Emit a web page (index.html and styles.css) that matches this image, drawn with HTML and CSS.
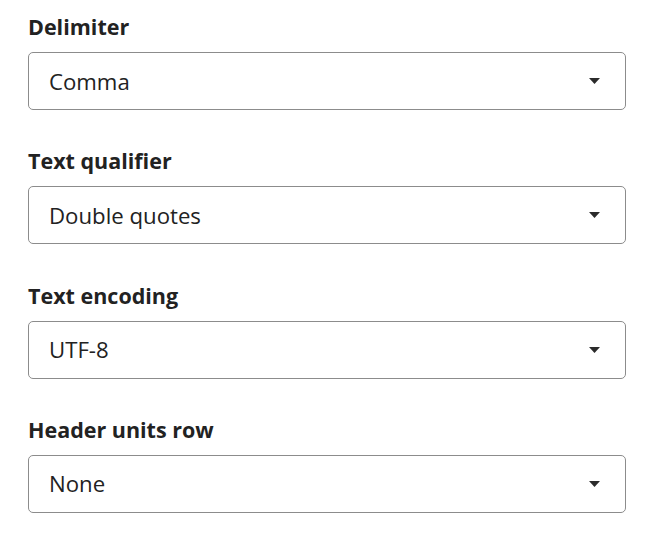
FILE: index.html
```html
<!DOCTYPE html>
<html lang="en">
<head>
  <meta charset="UTF-8" />
  <meta name="viewport" content="width=device-width, initial-scale=1.0"/>
  <title>Import options</title>
  <link rel="stylesheet" href="styles.css">
</head>
<body>
  <div class="form">
    <div class="field">
      <label>Delimiter</label>
      <div class="select">
        <span>Comma</span>
        <svg class="arrow" width="11" height="6" viewBox="0 0 11 6"><path d="M0 0h11L5.5 6z"/></svg>
      </div>
    </div>

    <div class="field">
      <label>Text qualifier</label>
      <div class="select">
        <span>Double quotes</span>
        <svg class="arrow" width="11" height="6" viewBox="0 0 11 6"><path d="M0 0h11L5.5 6z"/></svg>
      </div>
    </div>

    <div class="field">
      <label>Text encoding</label>
      <div class="select">
        <span>UTF-8</span>
        <svg class="arrow" width="11" height="6" viewBox="0 0 11 6"><path d="M0 0h11L5.5 6z"/></svg>
      </div>
    </div>

    <div class="field">
      <label>Header units row</label>
      <div class="select">
        <span>None</span>
        <svg class="arrow" width="11" height="6" viewBox="0 0 11 6"><path d="M0 0h11L5.5 6z"/></svg>
      </div>
    </div>
  </div>
</body>
</html>
```

FILE: styles.css
```css
body {
  margin: 0;
  background: #fff;
  font-family: "Open Sans", Arial, sans-serif;
  color: #222;
}

.form {
  padding: 13px 34px 0 28px;
}

.field {
  margin-bottom: 37.3px;
}

label {
  display: block;
  font-size: 21.5px;
  font-weight: 700;
  line-height: 28px;
  margin-bottom: 11px;
}

.select {
  height: 58px;
  box-sizing: border-box;
  border: 1px solid #8c8c8c;
  border-radius: 5px;
  display: flex;
  align-items: center;
  justify-content: space-between;
  padding: 0 25px 0 20px;
  font-size: 22.2px;
}

.arrow {
  fill: #2b2b2b;
}
```
